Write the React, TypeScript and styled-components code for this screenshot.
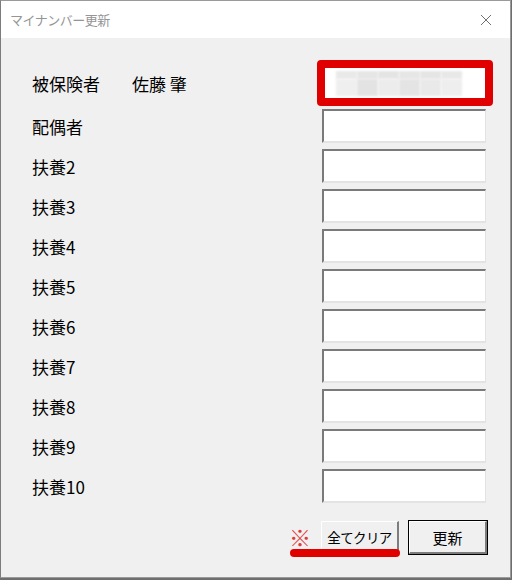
import styled, { createGlobalStyle } from "styled-components";

const labels = ["配偶者", "扶養2", "扶養3", "扶養4", "扶養5", "扶養6", "扶養7", "扶養8", "扶養9", "扶養10"];

// masked number shown in the first field (blurred blocks)
const maskTop = ["#e9e9e9", "#e6e6e6", "#e4e4e4", "#e6e6e6", "#e5e5e5", "#e8e8e8"];
const maskBottom = ["#efefef", "#e3e3e3", "#ececec", "#e4e4e4", "#e9e9e9", "#eeeeee"];

function App() {
  return (
    <>
      <GlobalStyle />
      <Window>
        <TitleBar>
          <Title>マイナンバー更新</Title>
          <CloseButton>
            <svg width="12" height="12" viewBox="0 0 12 12">
              <path d="M1 1 L11 11 M11 1 L1 11" stroke="#707070" strokeWidth="1" fill="none" />
            </svg>
          </CloseButton>
        </TitleBar>
        <Body>
          <Form>
            <Row $highlight>
              <Label>
                被保険者<Name>佐藤 肇</Name>
              </Label>
              <Highlight>
                <Field $inner>
                  <Mask>
                    {maskTop.map((c, i) => (
                      <MaskCell key={"t" + i} $tone={c} />
                    ))}
                    {maskBottom.map((c, i) => (
                      <MaskCell key={"b" + i} $tone={c} />
                    ))}
                  </Mask>
                </Field>
              </Highlight>
            </Row>
            {labels.map((l) => (
              <Row key={l}>
                <Label>{l}</Label>
                <Field />
              </Row>
            ))}
          </Form>
          <ButtonBar>
            <Note>※</Note>
            <ClearWrap>
              <Button $narrow>全てクリア</Button>
              <Underline />
            </ClearWrap>
            <DefaultButton>
              <Button>更新</Button>
            </DefaultButton>
          </ButtonBar>
        </Body>
      </Window>
    </>
  );
}

export default App;

const GlobalStyle = createGlobalStyle`
  html, body {
    margin: 0;
    padding: 0;
    background: #6e6e6e;
  }
  body {
    font-family: "Noto Sans CJK JP", "Liberation Sans", sans-serif;
  }
`;

const Window = styled.div`
  width: 509px;
  height: 576px;
  border: 1px solid #9a9a9a;
  border-left-color: #7c7c7c;
  background: #f0f0f0;
  display: flex;
  flex-direction: column;
`;

const TitleBar = styled.div`
  height: 37px;
  background: #ffffff;
  display: flex;
  align-items: center;
  justify-content: space-between;
  padding-left: 9px;
  flex-shrink: 0;
`;

const Title = styled.span`
  font-size: 13px;
  color: #959595;
  letter-spacing: -0.5px;
`;

const CloseButton = styled.div`
  width: 40px;
  height: 37px;
  display: flex;
  align-items: center;
  justify-content: center;
  margin-right: 4px;
`;

const Body = styled.div`
  flex: 1;
  display: flex;
  flex-direction: column;
  padding: 22px 24px 0 31px;
`;

const Form = styled.div`
  display: flex;
  flex-direction: column;
  gap: 6px;
`;

const Row = styled.div<{ $highlight?: boolean }>`
  display: flex;
  align-items: center;
  justify-content: space-between;
  height: ${(p) => (p.$highlight ? "46px" : "34px")};
  margin-bottom: ${(p) => (p.$highlight ? "-3px" : "0")};
`;

const Label = styled.div`
  font-size: 17px;
  color: #000;
  line-height: 1;
  padding-top: 1px;
`;

const Name = styled.span`
  margin-left: 32px;
`;

const Field = styled.div<{ $inner?: boolean }>`
  box-sizing: border-box;
  width: ${(p) => (p.$inner ? "160px" : "164px")};
  height: ${(p) => (p.$inner ? "30px" : "34px")};
  background: #ffffff;
  border-style: solid;
  border-width: ${(p) => (p.$inner ? "0" : "2px 1px 2px 2px")};
  border-color: #7a7a7a #e3e3e3 #e3e3e3 #7a7a7a;
  display: flex;
  align-items: center;
  padding-left: 11px;
`;

const Highlight = styled.div`
  border: 8px solid #e00000;
  border-radius: 4px;
  margin-right: -7px;
  background: #fff;
`;

const Mask = styled.div`
  display: grid;
  grid-template-columns: repeat(6, 21px);
  grid-template-rows: 8px 17px;
  margin-top: 1px;
`;

const MaskCell = styled.div<{ $tone: string }>`
  background: ${(p) => p.$tone};
  filter: blur(0.8px);
`;

const ButtonBar = styled.div`
  display: flex;
  align-items: center;
  justify-content: flex-end;
  margin-top: 17px;
  margin-right: -2px;
  gap: 9px;
`;

const Note = styled.span`
  color: #e03a3a;
  font-size: 22px;
  line-height: 1;
  margin-right: 1px;
  margin-top: -3px;
`;

const ClearWrap = styled.div`
  position: relative;
`;

const Underline = styled.div`
  position: absolute;
  left: -31px;
  right: -1px;
  bottom: -3px;
  height: 8px;
  border-radius: 4px;
  background: #e00000;
`;

const Button = styled.div<{ $narrow?: boolean }>`
  box-sizing: border-box;
  width: 78px;
  height: 33px;
  display: flex;
  align-items: center;
  justify-content: center;
  background: #f0f0f0;
  font-size: ${(p) => (p.$narrow ? "13.5px" : "15px")};
  letter-spacing: ${(p) => (p.$narrow ? "-0.6px" : "0")};
  color: #000;
  border-style: solid;
  border-width: 1px 2px 2px 1px;
  border-color: #ffffff #7d7d7d #7d7d7d #ffffff;
`;

const DefaultButton = styled.div`
  border: 1px solid #000;
  display: flex;
`;
